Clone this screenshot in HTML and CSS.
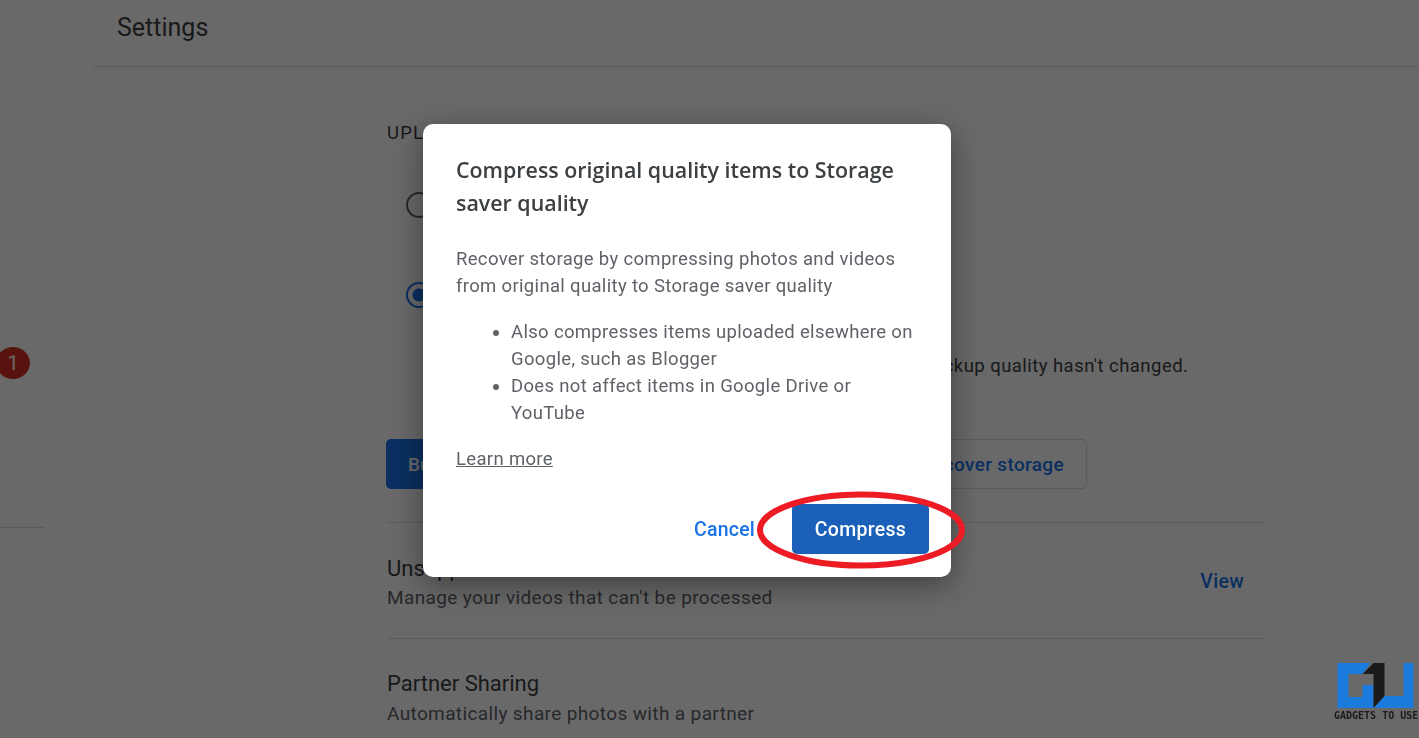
FILE: index.html
```html
<!DOCTYPE html>
<html lang="en">
<head>
    <meta charset="UTF-8">
    <title>Settings</title>
    <link rel="stylesheet" href="styles.css">
</head>
<body>
    <div class="page">
        <!-- Left nav, only the edge is visible -->
        <div class="sidebar">
            <div class="badge">1</div>
            <div class="side-line"></div>
        </div>

        <div class="content">
            <div class="topbar">Settings</div>

            <div class="main">
                <div class="section-label">UPLOAD SIZE</div>

                <div class="option option-first">
                    <span class="radio"></span>
                </div>
                <div class="option option-second">
                    <span class="radio radio-on"></span>
                </div>
                <div class="quality-note">Your backup quality hasn't changed.</div>

                <div class="actions">
                    <button class="btn-buy">Buy storage</button>
                    <button class="btn-recover">Recover storage</button>
                </div>

                <div class="row row-first">
                    <div>
                        <div class="row-title">Unsupported videos</div>
                        <div class="row-sub">Manage your videos that can't be processed</div>
                    </div>
                    <a href="#" class="row-link">View</a>
                </div>
                <div class="row">
                    <div>
                        <div class="row-title">Partner Sharing</div>
                        <div class="row-sub">Automatically share photos with a partner</div>
                    </div>
                </div>
            </div>
        </div>
    </div>

    <!-- Dialog -->
    <div class="scrim"></div>
    <div class="dialog">
        <h2>Compress original quality items to Storage saver quality</h2>
        <p>Recover storage by compressing photos and videos from original quality to Storage saver quality</p>
        <ul>
            <li>Also compresses items uploaded elsewhere on Google, such as Blogger</li>
            <li>Does not affect items in Google Drive or YouTube</li>
        </ul>
        <a href="#" class="learn">Learn more</a>
        <div class="dialog-btns">
            <button class="btn-cancel">Cancel</button>
            <button class="btn-compress">Compress</button>
        </div>
    </div>

    <!-- Red marker round the button -->
    <svg class="marker" width="212" height="82" viewBox="0 0 212 82">
        <ellipse cx="106" cy="40" rx="101" ry="35.5" fill="none" stroke="#ed1c24" stroke-width="6"/>
    </svg>

    <!-- Watermark -->
    <div class="watermark">
        <svg width="77" height="45" viewBox="0 0 76 45">
            <path fill="#1a7bdc" d="M0 0H33L25 11H11V34H25V22H36V45H0Z"/>
            <path fill="#1a7bdc" d="M36 45L47 33H66V0H76V45Z"/>
            <path fill="#1b1b1b" d="M36 0H47V33L36 45V11H25Z"/>
        </svg>
        <div class="wm-text">GADGETS TO USE</div>
    </div>
</body>
</html>
```

FILE: styles.css
```css
html, body {
    margin: 0;
    height: 100%;
    overflow: hidden;
}

body {
    font-family: "Roboto", "Liberation Sans", sans-serif;
    background-color: #fff;
    color: #202124;
}

.page {
    display: flex;
    height: 738px;
}

.sidebar {
    width: 93px;
    flex-shrink: 0;
    padding-top: 347px;
    box-sizing: border-box;
}

.badge {
    width: 34px;
    height: 32px;
    margin-left: -4px;
    border-radius: 50%;
    background-color: #d93025;
    color: #fff;
    font-size: 20px;
    line-height: 32px;
    text-align: center;
}

.side-line {
    width: 45px;
    height: 1px;
    margin-top: 148px;
    background-color: #dadce0;
}

.content {
    flex: 1;
}

.topbar {
    height: 66px;
    padding-left: 24px;
    border-bottom: 1px solid #dadce0;
    font-size: 25px;
    line-height: 55px;
    color: #3c4043;
}

.main {
    width: 879px;
    margin-left: 294px;
}

.section-label {
    margin-top: 55px;
    font-size: 18.5px;
    line-height: 22px;
    letter-spacing: 1.2px;
    color: #3c4043;
}

.option {
    padding-left: 19px;
}

.option-first {
    margin-top: 48px;
}

.option-second {
    margin-top: 64px;
}

.radio {
    display: block;
    width: 26px;
    height: 26px;
    box-sizing: border-box;
    border: 2px solid #5f6368;
    border-radius: 50%;
}

.radio-on {
    border-color: #1a73e8;
    background: radial-gradient(circle, #1a73e8 0 6px, #fff 7px);
}

.quality-note {
    margin-top: 46px;
    padding-left: 491px;
    white-space: nowrap;
    font-size: 18.5px;
    line-height: 24px;
    letter-spacing: .45px;
    color: #3c4043;
}

.actions {
    display: flex;
    gap: 17px;
    margin: 61px 0 0 -1px;
}

.btn-buy {
    width: 300px;
    height: 50px;
    border: none;
    border-radius: 5px;
    background-color: #1a73e8;
    color: #fff;
    font: 500 19px "Roboto", sans-serif;
    text-align: left;
    padding-left: 22px;
}

.btn-recover {
    width: 384px;
    height: 50px;
    box-sizing: border-box;
    border: 1px solid #dadce0;
    border-radius: 5px;
    background-color: #fff;
    color: #1a73e8;
    font: 500 19px "Roboto", sans-serif;
    letter-spacing: .35px;
    text-align: right;
    padding-right: 22px;
}

.row {
    display: flex;
    justify-content: space-between;
    align-items: center;
    padding: 30px 0 28px;
    border-top: 1px solid #dadce0;
}

.row-first {
    margin-top: 33px;
    padding: 31px 22px 28px 0;
}

.row-title {
    font-size: 22px;
    line-height: 29px;
    color: #3c4043;
}

.row-sub {
    margin-top: 2px;
    font-size: 19px;
    line-height: 25px;
    letter-spacing: .37px;
    color: #5f6368;
}

.row + .row .row-sub {
    margin-top: 3px;
}

.row-link {
    margin-bottom: 2px;
    font-size: 19.5px;
    font-weight: 500;
    letter-spacing: .3px;
    color: #1a73e8;
    text-decoration: none;
}

.scrim {
    position: fixed;
    inset: 0;
    background-color: rgba(0, 0, 0, .59);
}

.dialog {
    position: absolute;
    left: 423px;
    top: 124px;
    width: 528px;
    height: 453px;
    box-sizing: border-box;
    padding: 29px 33px 0;
    border-radius: 10px;
    background-color: #fff;
    box-shadow: 0 8px 30px rgba(0, 0, 0, .4);
    color: #5f6368;
    font-size: 18.5px;
    line-height: 27px;
    letter-spacing: .33px;
}

.dialog h2 {
    margin: 0;
    font-family: "Open Sans", sans-serif;
    font-size: 21.4px;
    font-weight: 600;
    line-height: 33px;
    letter-spacing: 0;
    color: #3c4043;
}

.dialog p {
    margin: 27px 0 0;
}

.dialog ul {
    margin: 19px 0 0;
    padding-left: 55px;
}

.learn {
    display: inline-block;
    margin-top: 19px;
    color: #5f6368;
}

.dialog-btns {
    display: flex;
    justify-content: flex-end;
    align-items: center;
    gap: 37px;
    margin: 31px -11px 0 0;
}

.btn-cancel {
    border: none;
    padding: 0;
    background: none;
    color: #1a73e8;
    font: 500 19.5px "Roboto", sans-serif;
    letter-spacing: .2px;
}

.btn-compress {
    width: 137px;
    height: 50px;
    border: none;
    border-radius: 5px;
    background-color: #1a5fb8;
    color: #fff;
    font: 500 19.5px "Roboto", sans-serif;
    letter-spacing: .3px;
}

.marker {
    position: absolute;
    left: 755px;
    top: 490px;
}

.watermark {
    position: absolute;
    left: 1334px;
    top: 663px;
    width: 85px;
}

.watermark svg {
    display: block;
    margin-left: 3px;
}

.wm-text {
    margin-top: 3px;
    font-family: "DejaVu Sans Mono", monospace;
    font-size: 10px;
    font-weight: bold;
    line-height: 10px;
    white-space: nowrap;
    color: #1b1b1b;
}
```
